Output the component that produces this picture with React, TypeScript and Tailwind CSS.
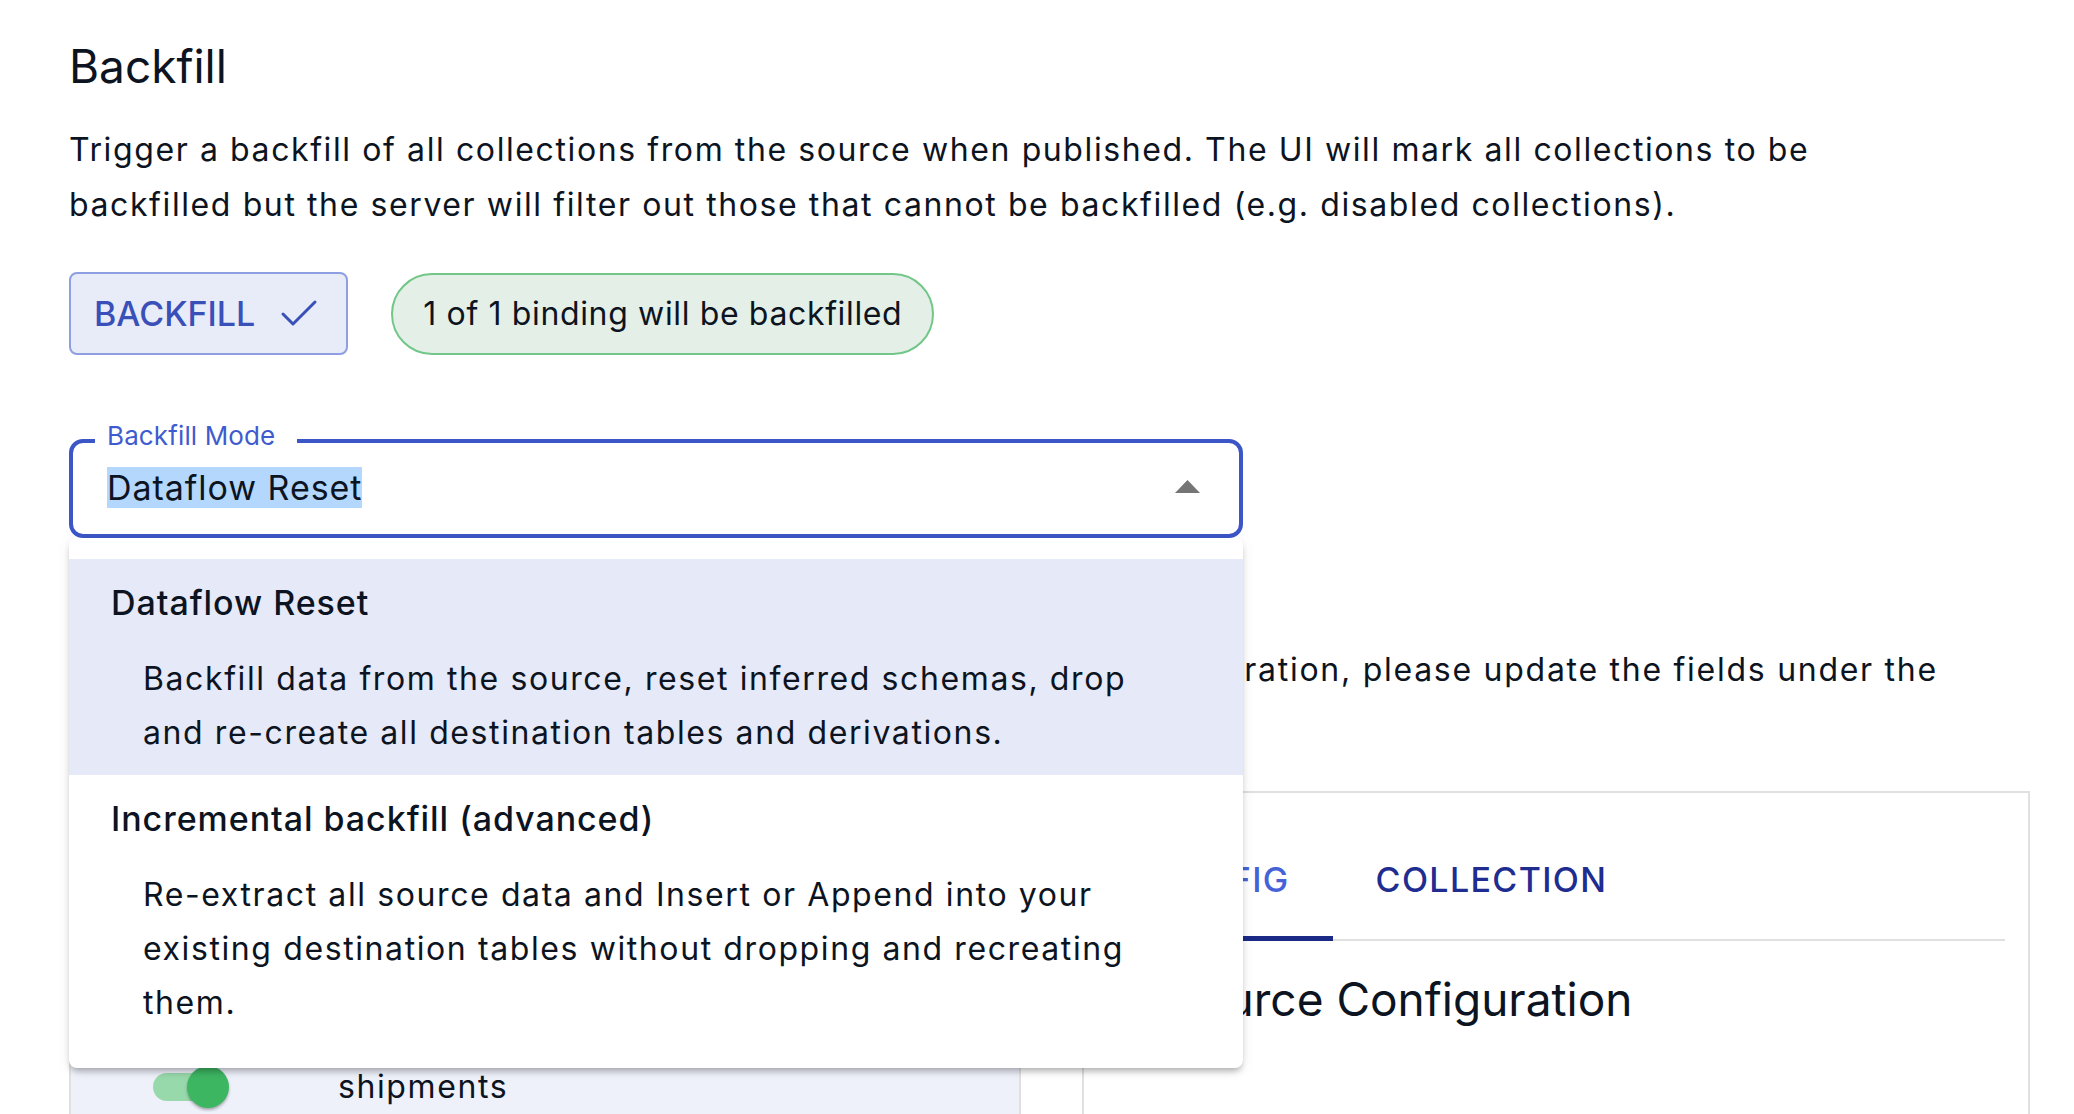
import React from "react";
import { Check } from "lucide-react";

const options = [
  {
    id: "reset",
    title: "Dataflow Reset",
    description:
      "Backfill data from the source, reset inferred schemas, drop and re-create all destination tables and derivations.",
    active: true,
  },
  {
    id: "incremental",
    title: "Incremental backfill (advanced)",
    description:
      "Re-extract all source data and Insert or Append into your existing destination tables without dropping and recreating them.",
    active: false,
  },
];

function BackfillModeSelect() {
  return (
    <div className="relative mt-[84px] w-[1174px]">
      {/* Outlined select, focused */}
      <div className="relative flex items-center rounded-[14px] border-4 border-[#3c56c8] pl-[34px] pr-[39px] pt-[23px] pb-[24px]">
        <span className="absolute left-[22px] top-[-23px] bg-white pl-[12px] pr-[22px] text-[26px] leading-[32px] tracking-[0.005em] text-[#3f5bd0]">
          Backfill Mode
        </span>
        <span className="flex-1 text-[34px] leading-[44px] tracking-[0.028em]">
          <span className="bg-[#b4d7fe]">Dataflow Reset</span>
        </span>
        <svg width="25" height="13" viewBox="0 0 25 13" className="mt-[-3px]">
          <polygon points="0,13 12.5,0 25,13" fill="#757575" />
        </svg>
      </div>

      {/* Open menu */}
      <div className="absolute left-0 top-full z-10 w-full rounded-[8px] bg-white pt-[21px] pb-[23px] shadow-[0_5px_6px_-2px_rgba(0,0,0,0.28),0_2px_14px_rgba(0,0,0,0.08)]">
        {options.map((opt) => (
          <div
            key={opt.id}
            className={`px-[42px] pt-[22px] pb-[15px] ${opt.active ? "bg-[#e6e9f7]" : ""}`}
          >
            <div className="text-[34px] leading-[44px] font-medium tracking-[0.028em]">{opt.title}</div>
            <div className="mt-[27px] px-[32px] text-[32px] leading-[54px] tracking-[0.05em]">
              {opt.description}
            </div>
          </div>
        ))}
      </div>
    </div>
  );
}

function BindingsPanel() {
  return (
    <div className="h-[400px] border-2 border-[#e0e0e0]">
      <div className="flex h-[150px] items-center pl-[40px] text-[32px] tracking-[0.05em]">Collections</div>
      <div className="flex h-[96px] items-center pl-[82px] text-[32px] tracking-[0.05em]">orders</div>
      <div className="flex h-[96px] items-center bg-[#eef0fa] pl-[82px]">
        <div className="relative h-[28px] w-[68px] rounded-full bg-[#98d9ab]">
          <div className="absolute left-[34px] top-[-7px] h-[42px] w-[42px] rounded-full bg-[#3db662] shadow-[0_2px_3px_rgba(0,0,0,0.3)]" />
        </div>
        <span className="ml-[117px] text-[32px] leading-[48px] tracking-[0.05em]">shipments</span>
      </div>
    </div>
  );
}

function ConfigCard() {
  return (
    <div className="h-[400px] border-2 border-[#e0e0e0] px-[23px] pt-[26px]">
      <div className="flex h-[122px] border-b-2 border-[#e0e0e0]">
        <div className="relative flex items-center px-[43px] text-[34px] font-medium tracking-[0.04em] text-[#4563d6]">
          CONFIG
          <div className="absolute bottom-[-2px] left-0 right-0 h-[5px] bg-[#1b2a87]" />
        </div>
        <div className="flex items-center px-[43px] text-[34px] font-medium tracking-[0.04em] text-[#1e2d8f]">
          COLLECTION
        </div>
      </div>
      <h3 className="mt-[31px] pl-[12px] text-[46px] leading-[55px]">Resource Configuration</h3>
    </div>
  );
}

export default function App() {
  return (
    <div className="min-h-screen overflow-hidden bg-white font-['Inter',sans-serif] text-[#0d1421]">
      <div className="pl-[69px] pr-[44px] pt-[39px]">
        <h2 className="text-[46px] leading-[55px]">Backfill</h2>
        <p className="mt-[28px] max-w-[1881px] text-[32px] leading-[55px] tracking-[0.05em]">
          Trigger a backfill of all collections from the source when published. The UI will mark all
          collections to be backfilled but the server will filter out those that cannot be backfilled
          (e.g. disabled collections).
        </p>

        <div className="mt-[40px] flex items-center gap-[43px]">
          <button className="flex h-[83px] items-center gap-[20px] rounded-[8px] border-2 border-[#8e9ee2] bg-[#e8ebf8] pl-[23px] pr-[23px] text-[34px] font-medium text-[#3850b7]">
            BACKFILL
            <Check size={48} strokeWidth={1.5} />
          </button>
          <div className="flex h-[82px] items-center rounded-full border-2 border-[#72c687] bg-[#e4efe8] px-[30px] text-[32px] tracking-[0.02em]">
            1 of 1 binding will be backfilled
          </div>
        </div>

        <BackfillModeSelect />

        <p className="mt-[104px] max-w-[1895px] text-[32px] leading-[55px] tracking-[0.054em]">
          The collections captured by this task are listed here. To edit a configuration, please
          update the fields under the Resource Config tab.
        </p>

        <div className="mt-[39px] grid grid-cols-[952px_948px] gap-[61px]">
          <BindingsPanel />
          <ConfigCard />
        </div>
      </div>
    </div>
  );
}
